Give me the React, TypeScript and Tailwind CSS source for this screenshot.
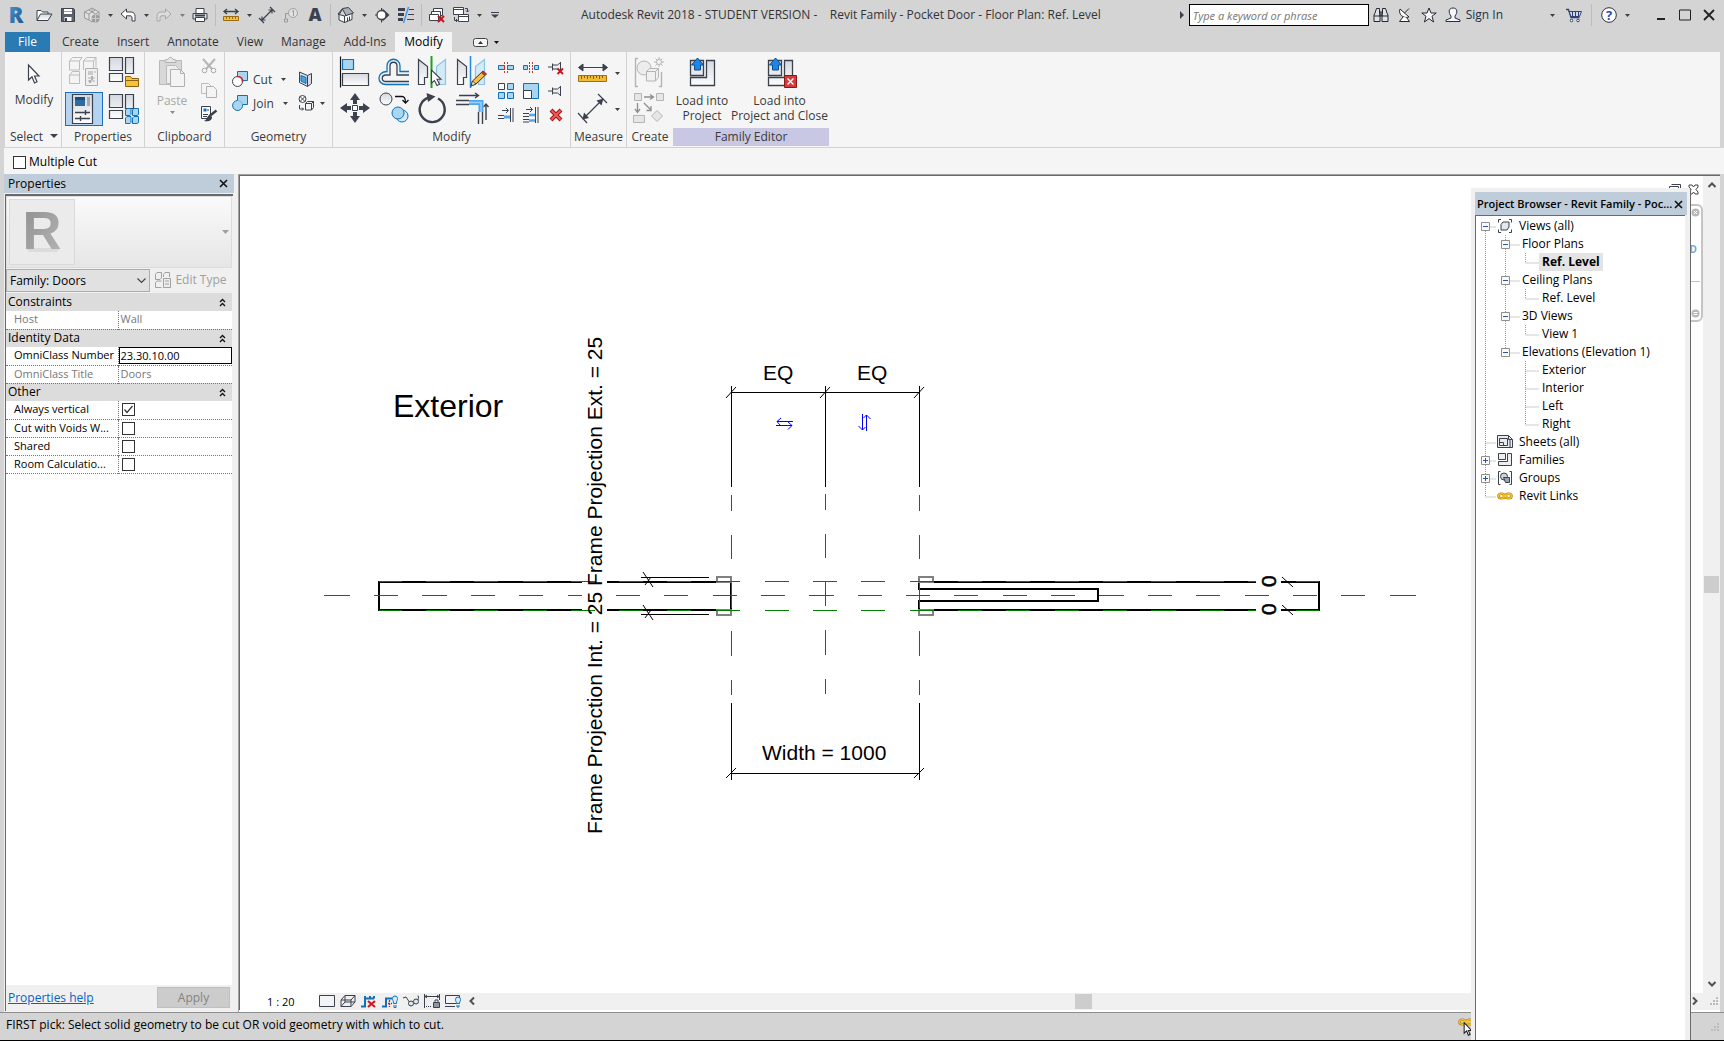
import type { ReactNode } from "react";
import clsx from "clsx";

const INK = "#3b424d";
const BLUE = "#1170b8";
const SKY = "#a8d6f0";
const GREY = "#b4b4b4";

type IconProps = { size?: number; w?: number; h?: number; children: ReactNode };

const Svg = ({ size = 16, w, h, children }: IconProps) => (
    <svg
        width={w ?? size}
        height={h ?? size}
        viewBox={`0 0 ${w ?? size} ${h ?? size}`}
        fill="none"
        className="block shrink-0 overflow-visible"
        aria-hidden="true"
    >
        {children}
    </svg>
);

const Caret = ({ color = "#3f3f3f" }: { color?: string }) => (
    <Svg w={5} h={3}>
        <path d="M0 0h5L2.5 3z" fill={color} />
    </Svg>
);

/* ---------- quick access icons ---------- */

const OpenIcon = () => (
    <Svg>
        <path d="M1 13V3.500h4l1.500 1.500H12V7" fill="#fff" stroke={INK} />
        <path d="M1 13.500l3.500-6.500H16l-4 6.500z" fill="url(#steel)" stroke={INK} />
    </Svg>
);
const SaveIcon = () => (
    <Svg>
        <path d="M1.500 1.500h12l1 1v12h-13z" fill="#5a626e" stroke={INK} />
        <path d="M4 2h8v5H4zM4.500 10h7v4h-7z" fill="#fff" />
        <path d="M4 4.500h8" stroke="#9aa3ae" />
        <path d="M6 11v3" stroke={INK} strokeWidth="2" />
    </Svg>
);
const GalleryIcon = () => (
    <Svg>
        <path d="M.5 5l4-2 3.500-2 3.500 2 3.500 2v6l-4 2-3 2-3-2-4.500-2z" fill="#e0e0e0" stroke="#999" />
        <path d="M.5 5L5 7v6M5 7l3-2 3.500 2L15 5M8 5v-4M4.500 3L8 5l3.500-2" stroke="#999" />
        <circle cx="11.500" cy="11.500" r="4" fill="#9d9d9d" />
        <path d="M8 11.500h7M11.500 8v7" stroke="#ccc" />
    </Svg>
);
const UndoIcon = () => (
    <Svg>
        <path d="M1 7l5.500-5v3H11c3 0 4 2 4 4.500V14h-3v-3c0-1.500-.5-2.200-2-2.200H6.500V12z" fill="#fff" stroke={INK} />
    </Svg>
);
const RedoIcon = () => (
    <Svg>
        <path d="M15 7L9.500 2v3H5C2 5 1 7 1 9.500V14h3v-3c0-1.500.5-2.200 2-2.200h3.500V12z" fill="#dcdcdc" stroke="#a6a6a6" />
    </Svg>
);
const PrintIcon = () => (
    <Svg>
        <path d="M4 6V1.500h8V6" fill="#fff" stroke={INK} />
        <path d="M1 6.500h14V12H1z" fill="#dfe3e8" stroke={INK} />
        <path d="M3 8.500h10" stroke={INK} strokeWidth="2" />
        <path d="M3.500 10.500h9v4h-9z" fill="#fff" stroke={INK} />
    </Svg>
);
const RulerIcon = () => (
    <Svg>
        <path d="M1 4.500h14M4 2L1 4.500 4 7M12 2l3 2.500L12 7" stroke={INK} strokeWidth="1.300" />
        <path d="M.5 9.500h15v4H.5z" fill="#f3c23c" stroke="#9b6a12" />
        <path d="M3.500 10v2M6.500 10v2M9.500 10v2M12.500 10v2" stroke="#9b6a12" />
    </Svg>
);
const DimIcon = () => (
    <Svg>
        <path d="M3 13L13 3M9.500 3H13v3.500M3 9.500V13h3.500M0 11l5 5M11 0l5 5" stroke={INK} strokeWidth="1.200" />
    </Svg>
);
const TagIcon = () => (
    <Svg>
        <circle cx="10" cy="6" r="4.500" fill="#e2e2e2" stroke="#a0a0a0" />
        <path d="M9 4.500l1.500-1V9M5.500 6.500H2.500V12M1.500 12h3v3h-3z" stroke="#9a9a9a" />
    </Svg>
);
const LetterIcon = () => (
    <Svg>
        <text x="8" y="14" textAnchor="middle" fontSize="18" fontWeight="800" fill={INK} fontFamily="Open Sans, sans-serif">
            A
        </text>
    </Svg>
);
const HouseIcon = () => (
    <Svg>
        <path d="M1 7.500v5.500l5.500 2.500V9zM6.500 9v6.500l7.500-3V6z" fill="#f4f5f7" stroke={INK} />
        <path d="M0 7l4.500-5.500L10.500.500 15.500 6 8 8.500 4.500 2 1 8z" fill="#aab0ba" stroke={INK} />
        <path d="M9.500 10.500v3.500M11.500 9.500v3.500" stroke={INK} />
    </Svg>
);
const SectionIcon = () => (
    <Svg>
        <path d="M8.500 1.500L15.500 8l-7 6.500z" fill={INK} />
        <circle cx="7.500" cy="8" r="4.500" fill="#fff" stroke={INK} strokeWidth="1.300" />
        <path d="M1 8h2M7.500 1v3M7.500 12v3.500" stroke={INK} />
    </Svg>
);
const ThinIcon = () => (
    <Svg>
        <path d="M0 2.500h7M0 7.500h6M0 12.500h5" stroke={INK} strokeWidth="3" />
        <path d="M11 2.500h5M10 7.500h6M9 12.500h7" stroke={INK} />
        <path d="M10.500 0L5.500 16" stroke="#3b96f0" strokeWidth="1.400" />
    </Svg>
);
const CloseHiddenIcon = () => (
    <Svg>
        <path d="M4.500 1.500h9v7h-9z" fill="#fff" stroke={INK} />
        <path d="M2.500 4.500h9v6h-9z" fill="#fff" stroke={INK} />
        <path d="M.5 7.500h9v6h-9z" fill="#fff" stroke={INK} />
        <path d="M9 9l6 6M15 9l-6 6" stroke="#c6141c" strokeWidth="2" />
    </Svg>
);
const SwitchIcon = () => (
    <Svg>
        <path d="M.5.500h10v7H.5z" fill="#fff" stroke={INK} />
        <path d="M.5 2.500h10" stroke={INK} />
        <path d="M5.500 7.500h10v7h-10z" fill="#fff" stroke={INK} />
        <path d="M5.500 9.500h10M1.500 10v3.500h3M3 12l1.500 1.500L3 15M12 1.500h2.500V5M13 3.500L14.500 5 16 3.500" stroke={INK} />
    </Svg>
);

/* ---------- title bar, right side ---------- */

const BinocularsIcon = () => (
    <Svg>
        <path d="M2 6l1.500-4.500h3V6l.5 1v7.500H1V8zM14 6l-1.500-4.500h-3V6L9 7v7.500h6V8z" fill="#dfe3e8" stroke="#23272e" />
        <path d="M7 5h2v4H7zM1 9h6M9 9h6" stroke="#23272e" />
    </Svg>
);
const DishIcon = () => (
    <Svg>
        <path d="M3 2c-2 5 3 10 9 8z" fill="#fff" stroke="#23272e" />
        <path d="M7.500 6L12 1.500" stroke="#23272e" />
        <path d="M6 10l-3.500 4.500h10L9.500 10.500" fill="#fff" stroke="#23272e" />
    </Svg>
);
const StarIcon = () => (
    <Svg>
        <path d="M8 1l2 5h5.200l-4.200 3.300L12.600 15 8 11.600 3.400 15 5 9.300.8 6H6z" fill="#f4f6f8" stroke="#23272e" />
    </Svg>
);
const PersonIcon = () => (
    <Svg>
        <path d="M8 1c5 0 4.500 5 2 8v2l5 2v1.500H1V13l5-2V9C3.500 6 3 1 8 1z" fill="#f4f6f8" stroke="#23304a" />
    </Svg>
);
const CartIcon = () => (
    <Svg>
        <path d="M0 2.500h2.500L5 10.500h8.500" stroke="#2c4376" strokeWidth="1.300" />
        <path d="M3 4.500h12.500l-2 5H5z" fill="#cfd9ee" stroke="#2c4376" />
        <path d="M6.500 5v4M9.500 5v4M12.500 5v4" stroke="#2c4376" />
        <circle cx="5.500" cy="13.500" r="1.300" fill="#fff" stroke="#2c4376" />
        <circle cx="12" cy="13.500" r="1.300" fill="#fff" stroke="#2c4376" />
    </Svg>
);
const HelpIcon = () => (
    <Svg>
        <circle cx="8" cy="8" r="7.300" fill="#fff" stroke="#2c3440" />
        <text x="8" y="12.500" textAnchor="middle" fontSize="13" fontWeight="700" fill="#1f50b8" fontFamily="Open Sans, sans-serif">
            ?
        </text>
    </Svg>
);

/* ---------- ribbon icons ---------- */

const CursorIcon = () => (
    <Svg w={14} h={20}>
        <path d="M1.500 1v15l3.500-3.300L7.500 19l2.500-1.200L7.500 12h4.500z" fill="#fff" stroke={INK} strokeWidth="1.200" />
    </Svg>
);
const FamilyTypesIcon = () => (
    <Svg size={32}>
        <path
            d="M1.500 5l3-3.500h9.500l-2.500 3.500v9h-10zM15.500 5l3-3.500h9.500v10M1.500 19l3-3.500h7v12h-10zM15.500 14V5h10v7M25.500 5l2.500-3.500M1.500 5h10M1.500 19h10"
            fill="#f4f4f4"
            stroke="#bdbdbd"
        />
        <path d="M17.500 12.500h12v17h-12z" fill="#f0f0f0" stroke="#adadad" />
        <path d="M20 15h5v4h-5z" fill="#c9c9c9" />
        <path d="M26 16h2M20 22h7M20 25h7" stroke="#b0b0b0" />
        <path d="M24 20v4M22 24v3" stroke="#b0b0b0" strokeWidth="2" />
    </Svg>
);
const CategoryIcon = () => (
    <Svg size={32}>
        <path d="M1.500 1.500h13v13h-13zM17.500 1.500h8v16h-8zM1.500 17.500h13v8h-13z" fill="url(#steel)" stroke={INK} strokeWidth="1.200" />
        <path d="M17.500 30.500v-10h5l1.500 2h6.500v8z" fill="#f5c33a" stroke="#8f6210" />
        <path d="M18 24.500h12" stroke="#8f6210" />
    </Svg>
);
const PropertiesIcon = () => (
    <Svg size={32}>
        <path d="M6.500 1.500h20v29h-20z" fill="url(#steel)" stroke={INK} strokeWidth="1.200" />
        <path d="M9 4h10v9H9z" fill="#2f6a9e" />
        <path d="M9 4h10v3H9z" fill="#1c4d7c" />
        <path d="M21 4h3v9h-3z" fill="#a4a9b2" />
        <path d="M9 19.500h15M9 25.500h15M19.500 17v5M14.500 23v5" stroke={INK} strokeWidth="1.400" />
    </Svg>
);
const ComponentsIcon = () => (
    <Svg size={32}>
        <path d="M1.500 1.500h13v13h-13zM17.500 1.500h8v14h-8zM1.500 17.500h13v8h-13z" fill="url(#steel)" stroke={INK} strokeWidth="1.200" />
        <path d="M17.500 17l1.500-1.500h4v6l-1 1h-4.500zM24.500 17l1.500-1.500h4.500v6l-1.500 1h-4.500zM17.500 25l1.500-1.500h4v6l-1 1h-4.500zM24.500 25l1.500-1.500h4.500v6l-1.500 1h-4.500z" fill={SKY} stroke={BLUE} />
    </Svg>
);
const PasteIcon = () => (
    <Svg size={32}>
        <path d="M3.500 4.500h22v24h-22z" fill="#d8d8d8" stroke="#b8b8b8" />
        <path d="M9 6.500V4l3-.5c1-3 4-3 5 0l3 .5v2.500z" fill="#e6e6e6" stroke="#b0b0b0" />
        <path d="M10.500 9.500h9l3 3v15h-12z" fill="#eee" stroke="#bbb" />
        <path d="M14.500 13.500h10l4 4v13h-14z" fill="#f3f3f3" stroke="#b0b0b0" />
        <path d="M24.500 13.500v4h4" stroke="#b0b0b0" />
    </Svg>
);
const ScissorsIcon = () => (
    <Svg>
        <path d="M2 1l9 10M14 1L5 11" stroke="#b5b5b5" strokeWidth="2" />
        <circle cx="3.500" cy="12.500" r="2.300" stroke="#a8a8a8" />
        <circle cx="12.500" cy="12.500" r="2.300" stroke="#a8a8a8" />
    </Svg>
);
const CopyIcon = () => (
    <Svg>
        <path d="M.5 1.500h7l2 2v8h-9z" fill="#f4f4f4" stroke="#bdbdbd" />
        <path d="M5.500 4.500h7l3 3v8h-10z" fill="#f4f4f4" stroke="#b0b0b0" />
    </Svg>
);
const MatchIcon = () => (
    <Svg>
        <path d="M.5.500h9v12h-9z" fill="#fff" stroke={INK} />
        <path d="M2.500 2.500h3v3h-3z" fill={BLUE} />
        <path d="M7 3v2M2 8.500h5M2 10.500h4" stroke={INK} />
        <path d="M15.500 4.500L8.500 10" stroke={INK} strokeWidth="2.400" />
        <path d="M9 9c-3 0-2 4-6 6 4 1 8 0 8-4z" fill={INK} />
    </Svg>
);
const CutGeoIcon = () => (
    <Svg>
        <path d="M5.500.500h10v9h-10z" fill={SKY} stroke={BLUE} />
        <circle cx="5.500" cy="10.500" r="5" fill="#fff" stroke={INK} />
        <path d="M5 5.500c4-.500 6 2.500 5.500 5.500" stroke="#e01b22" strokeWidth="1.500" />
    </Svg>
);
const JoinGeoIcon = () => (
    <Svg>
        <path d="M5.500 5.500v-5h10v9h-5a5 5 0 11-5-4z" fill={SKY} stroke={BLUE} />
        <path d="M5.500 5.500c3 0 5 2 4.800 4" stroke="#6db4de" />
    </Svg>
);
const WallIcon = () => (
    <Svg>
        <path d="M1.500 1l8 3.500 4-2v10l-4 3-8-4z" fill="#d9dde3" stroke={INK} />
        <path d="M9.500 4.500v11" stroke={INK} />
        <path d="M3 4.500l5 2v6l-5-2.500z" fill="#4da1d8" stroke={BLUE} />
    </Svg>
);
const SplitFaceIcon = () => (
    <Svg>
        <circle cx="4.500" cy="4" r="3.500" fill="#fff" stroke={INK} />
        <path d="M2 1.500l5 5M7 1.500l-5 5M1.500 10v4h4M4 12.500L5.500 14 4 15.500" stroke={INK} />
        <path d="M7.500 8.500l2-2h6v6l-2 2.500h-6zM7.500 8.500h6v6.500M13.500 8.500l2-2" fill="#f2f4f6" stroke={INK} />
    </Svg>
);
const AlignIcon = () => (
    <Svg size={32}>
        <path d="M1.500.500v31" stroke="#111" strokeWidth="1.200" />
        <path d="M3.500 3.500h11v10h-11z" fill={SKY} stroke={BLUE} strokeWidth="1.200" />
        <path d="M3.500 17.500h26v12h-26z" fill="url(#steel)" stroke={INK} strokeWidth="1.200" />
    </Svg>
);
const OffsetIcon = () => (
    <Svg size={32}>
        <path d="M31 15.500H22V10c0-9-13-9-13 0v5.500C-1.500 15.500-1.500 28.500 8 28.500h23" fill="#e8f4fb" stroke={BLUE} strokeWidth="1.300" />
        <path d="M31 19H19V10c0-5-7-5-7 0v9H8c-5 0-5 6.500 0 6.500h23" fill="#f5f5f5" stroke={INK} strokeWidth="1.300" />
    </Svg>
);
const MirrorShapes = () => (
    <>
        <path d="M1.500 3.500l9 7v11h-3v7h-6z" fill="url(#steel)" stroke={INK} strokeWidth="1.200" />
        <path d="M28.500 3.500l-9 7v11h3v7h6z" fill="#d3eaf7" stroke="#8fc3e4" strokeWidth="1.200" />
    </>
);
const MirrorPickIcon = () => (
    <Svg size={32}>
        <MirrorShapes />
        <path d="M14.500 0v32" stroke="#20a020" strokeWidth="2" />
        <path d="M14.500 14v13l3-2.500 2.500 5 2.500-1.200-2.500-5h4z" fill="#fff" stroke={INK} strokeWidth="1.100" />
    </Svg>
);
const Pencil = () => (
    <>
        <path d="M15 30l1.500-5L27 15l3.500 3L20 28z" fill="#f6bf45" stroke="#3a3025" />
        <path d="M15 30l1.500-5 3.500 3z" fill="#fbe7c6" stroke="#3a3025" strokeWidth=".8" />
        <path d="M25 17l3.500 3 2-2-3.500-3z" fill="#b8392d" />
    </>
);
const MirrorDrawIcon = () => (
    <Svg size={32}>
        <MirrorShapes />
        <path d="M14.500 0v32" stroke="#1f8ae0" strokeWidth="1.500" />
        <Pencil />
    </Svg>
);
const MoveIcon = () => (
    <Svg size={32}>
        <path d="M16 1l5 7h-3v4h-4V8h-3zM16 31l5-7h-3v-4h-4v4h-3zM1 16l7-5v3h4v4H8v3zM31 16l-7-5v3h-4v4h4v3z" fill={INK} />
        <path d="M13.500 13.500h5v5h-5z" fill="#fff" stroke={INK} />
    </Svg>
);
const CopyModIcon = () => (
    <Svg size={32}>
        <circle cx="8" cy="7" r="6" fill="url(#steel)" stroke={INK} />
        <path d="M17 4.500h7c2.500 0 3.500 1.500 3.500 6M24.500 8l3 3 3-3" stroke="#111" strokeWidth="1.300" />
        <circle cx="24" cy="24" r="6" fill="#d3eaf7" stroke={BLUE} />
        <circle cx="20" cy="21" r="6" fill={SKY} stroke={BLUE} />
    </Svg>
);
const RotateIcon = () => (
    <Svg size={32}>
        <path d="M12 5.500A12.500 12.500 0 1021 6.500" stroke={INK} strokeWidth="2.400" />
        <path d="M9.500 1l9 3.500L11 10z" fill={INK} />
    </Svg>
);
const TrimIcon = () => (
    <Svg size={32}>
        <path d="M3 3.500h19M19 1l3.500 2.500L19 6M0 8.500h13M0 12.500h13M22.500 20v12M26.500 20v12M30 28V12M27.500 15l2.500-3 2.500 3" stroke={INK} strokeWidth="1.400" />
        <path d="M13 10.500h12V20" stroke="#4fa6f2" strokeWidth="5" />
        <path d="M13 10.500h12V20" stroke="#9dd0fb" strokeWidth="1.500" />
    </Svg>
);
const SplitIcon = () => (
    <Svg>
        <path d="M.5 6.500h6v4h-6zM9.500 6.500h6v4h-6z" fill={SKY} stroke={BLUE} />
        <path d="M6.500 3v11M9.500 3v11" stroke="#c8352b" strokeDasharray="2 1" />
    </Svg>
);
const SplitGapIcon = () => (
    <Svg>
        <path d="M.5 6.500h4v4h-4zM11.500 6.500h4v4h-4z" fill={SKY} stroke={BLUE} />
        <path d="M6.500 3v11M9.500 3v11" stroke="#c8352b" strokeDasharray="2 1" />
    </Svg>
);
const PinShape = () => (
    <path d="M0 8h4M4.500 4.500v7M4.500 6h5l3-2.500v9l-3-2.500h-5M12.500 3v10" fill="#eceef1" stroke={INK} />
);
const UnpinIcon = () => (
    <Svg>
        <PinShape />
        <path d="M9.500 9.500l5.500 5.500M15 9.500L9.500 15" stroke="#c6141c" strokeWidth="1.800" />
    </Svg>
);
const PinIcon = () => (
    <Svg>
        <PinShape />
    </Svg>
);
const ArrayIcon = () => (
    <Svg>
        <path d="M.5.500h6v6h-6z" fill="#fff" stroke={INK} />
        <path d="M9.500.500h6v6h-6zM.5 9.500h6v6h-6zM9.500 9.500h6v6h-6z" fill={SKY} stroke={BLUE} />
    </Svg>
);
const ScaleIcon = () => (
    <Svg>
        <path d="M.5.500h15v15H.5z" fill={SKY} stroke={BLUE} />
        <path d="M.5 7.500h8v8h-8z" fill="#fff" stroke={INK} />
    </Svg>
);
const ExtendIcon = () => (
    <Svg>
        <path d="M4 3.500h6M8 1l2.500 2.500L8 6M0 8.500h6M0 11.500h6M12.500 1v14M15 1v14" stroke={INK} />
        <path d="M6 10h6" stroke="#4fa6f2" strokeWidth="3" />
    </Svg>
);
const ExtendMultiIcon = () => (
    <Svg>
        <path d="M3 2.500h6M7 0l2.500 2.500L7 5M0 6.500h6M0 9.500h6M0 12.500h6M0 15h6M12.500 0v16M15 0v16" stroke={INK} />
        <path d="M6 8h6M6 13.500h6" stroke="#4fa6f2" strokeWidth="2.500" />
    </Svg>
);
const DeleteIcon = () => (
    <Svg>
        <path d="M3 3l10 10M13 3L3 13" stroke="#a01318" strokeWidth="4" />
        <path d="M3.500 3.500l9 9M12.500 3.500l-9 9" stroke="#f05a55" strokeWidth="2" />
    </Svg>
);
const MeasureIcon = () => (
    <Svg w={32} h={22}>
        <path d="M2 5.500h28M6 2L1.500 5.500 6 9zM26 2l4.500 3.500L26 9z" stroke={INK} fill={INK} />
        <path d="M1.500 13.500h28v6h-28z" fill="#f0bb35" stroke="#a06f14" />
        <path d="M4.500 14v3M7.500 14v2M10.500 14v3M13.500 14v2M16.500 14v3M19.500 14v2M22.500 14v3M25.500 14v2" stroke="#8a5c0c" />
    </Svg>
);
const AlignedDimIcon = () => (
    <Svg size={32}>
        <path d="M7 25L25 7M1 20l9 10M21 1l9 9" stroke={INK} strokeWidth="1.200" />
        <path d="M5.500 26.500l1.500-7 5 5.500zM26.500 5.500l-7 2 5 5z" fill={INK} />
    </Svg>
);
const GroupIcon = () => (
    <Svg size={32}>
        <path d="M5 2.500H2.500v28H5M26 30.500h2.500V16" stroke={GREY} strokeWidth="1.400" />
        <circle cx="11" cy="12" r="7" fill="#ededed" stroke={GREY} />
        <path d="M13.500 15.500l3-3h9v9l-3 3.500h-9zM13.500 15.500h9V25M22.500 15.500l3-3" fill="#f0f0f0" stroke={GREY} />
        <path d="M26 1v10M21 6h10M22.500 2.500l7 7M29.500 2.500l-7 7" stroke={GREY} />
        <circle cx="26" cy="6" r="2.500" fill="#f5f5f5" stroke={GREY} />
    </Svg>
);
const AssemblyIcon = () => (
    <Svg size={32}>
        <path d="M1.500 1.500h7v7h-7zM23.500 1.500h7v7h-7zM.500 23.500h11v7h-11zM24 18.500l5.500 5.500-5.500 5.500-5.500-5.500z" fill="#e6e6e6" stroke={GREY} />
        <path d="M11 5h9M17 2.500L20.500 5 17 7.500M4.500 11v9M2 17l2.500 3.500L7 17M11 11l7 7M18 14v4.500h-4.500" stroke="#8e8e8e" strokeWidth="1.300" />
    </Svg>
);
const LoadShape = () => (
    <>
        <path d="M4.500 3.500h13v15h-13zM20.500 3.500h8v25h-24v-8h16z" fill="url(#steel)" stroke={INK} strokeWidth="1.300" />
        <path d="M11.500 1l6 7h-3v5h-6V8h-3z" fill="#1f86e4" stroke="#0d4f93" />
    </>
);
const LoadIcon = () => (
    <Svg size={32}>
        <LoadShape />
    </Svg>
);
const LoadCloseIcon = () => (
    <Svg size={32}>
        <LoadShape />
        <path d="M20.500 18.500h12v12h-12z" fill="#d63a3a" stroke="#8c1717" />
        <path d="M23.500 21.500l6 6M29.500 21.500l-6 6" stroke="#fff" strokeWidth="1.400" />
    </Svg>
);

/* ---------- browser + view bar icons ---------- */

const ViewsIcon = () => (
    <Svg>
        <path d="M4 1.500H1.500v3M12 1.500h2.500v3M4 14.500H1.500v-3M12 14.500h2.500v-3" stroke={INK} />
        <path d="M4 6.500L6 4h6v5l-2 3H4z" fill="#e4e7eb" stroke={INK} />
    </Svg>
);
const SheetsIcon = () => (
    <Svg>
        <path d="M.5 1.500h11l4 4v8H.5z" fill="#e9ecef" stroke={INK} />
        <path d="M2.500 4.500h8v7h-8zM2.500 8.500h4v3M11.500 1.500v4h4M13 6v7" stroke={INK} />
    </Svg>
);
const FamiliesIcon = () => (
    <Svg>
        <path d="M1.500 1.500h7v6h-7zM10.500 1.500h4v12h-13v-4h9z" fill="#eceef1" stroke={INK} />
    </Svg>
);
const GroupsIcon = () => (
    <Svg>
        <path d="M3.500 1.500h-2v13h2M12.500 1.500h2v13h-2" stroke={INK} />
        <circle cx="7" cy="6.500" r="3.500" fill="#cfd3da" stroke={INK} />
        <path d="M6.500 7.500h6v5h-4z" fill="#9ba3b0" stroke={INK} />
    </Svg>
);
const LinkIcon = () => (
    <Svg>
        <path d="M1.500 8c0-3 6-3 6 0s-6 3-6 0zM8.500 8c0-3 6-3 6 0s-6 3-6 0z" stroke="#b37a08" strokeWidth="2.500" />
        <path d="M1.500 8c0-3 6-3 6 0s-6 3-6 0zM8.500 8c0-3 6-3 6 0s-6 3-6 0zM5 8h6" stroke="#f3c32c" strokeWidth="1.300" />
    </Svg>
);
const DetailIcon = () => (
    <Svg>
        <path d="M.5 2.500h15v11H.5z" fill="#f1f3f6" stroke={INK} />
    </Svg>
);
const StyleIcon = () => (
    <Svg>
        <path d="M1 7l4-4.500h10V9l-4 4.500H1zM1 7h10v6.500M11 7l4-4.500M5 2.500V9h10M5 9l-4 4.500" stroke={INK} />
    </Svg>
);
const CropOffIcon = () => (
    <Svg>
        <path d="M0 13.500h4v-8h9M13 5.500V3M4 5.500V3M9 5.500V3" stroke={BLUE} strokeWidth="2" />
        <path d="M7 8l7 6M14 8l-7 6" stroke="#d01820" strokeWidth="2.200" />
    </Svg>
);
const CropShowIcon = () => (
    <Svg>
        <path d="M0 13.500h4v-8h6" stroke={BLUE} strokeWidth="2" />
        <path d="M7.500 7v7M6 10.500h4" stroke="#d01820" strokeWidth="1.300" strokeDasharray="2 1" />
        <path d="M10.500 5.500a2.500 2.500 0 015 0c0 2-1 2-1 5h-3c0-3-1-3-1-5zM12 12v2.500h2V12" fill="#d7ecfa" stroke={BLUE} />
    </Svg>
);
const HideIcon = () => (
    <Svg>
        <path d="M0 5l3-1 4 6M15 2.500c1 2 0 4 0 5" stroke={INK} />
        <circle cx="8" cy="10.500" r="2.500" fill="#dfe6ee" stroke={INK} />
        <circle cx="13" cy="8.500" r="2.500" fill="#dfe6ee" stroke={INK} />
    </Svg>
);
const RevealIcon = () => (
    <Svg>
        <path d="M.5 1v14M15.500 1v6M1 3.500h14M3 2L1 3.500 3 5M13 2l2 1.500L13 5" stroke={INK} />
        <path d="M2 13.500h6" stroke={INK} strokeDasharray="1 1" />
        <path d="M9.500 9.500h6v5h-6z" fill="#8e96a3" stroke={INK} />
        <path d="M11 9V7h3v2" stroke={INK} />
    </Svg>
);
const ConstraintsIcon = () => (
    <Svg>
        <path d="M.5 2.500h14v8H.5zM0 13.500h10" stroke={INK} fill="#f1f3f6" />
        <path d="M10.500 6.500a2.300 2.300 0 015 0c0 2-1 2-1 4h-3c0-2-1-2-1-4zM12 12v2h2v-2" fill="#d7ecfa" stroke={BLUE} />
    </Svg>
);

const Chevron = ({ dir }: { dir: "up" | "down" | "left" | "right" }) => {
    const d = {
        up: "M1.500 7L5 3.500 8.500 7",
        down: "M1.500 3L5 6.500 8.500 3",
        left: "M7 1.500L3.500 5 7 8.500",
        right: "M3 1.500L6.500 5 3 8.500",
    }[dir];
    return (
        <Svg size={10}>
            <path d={d} stroke="#505050" strokeWidth="2" />
        </Svg>
    );
};

const Grip = () => (
    <Svg size={10}>
        <path d="M7 1h2v2H7zM4 4h2v2H4zM7 4h2v2H7zM1 7h2v2H1zM4 7h2v2H4zM7 7h2v2H7z" fill="#bdbdbd" />
    </Svg>
);

/* ---------- title bar ---------- */

const IconButton = ({ label, className, children }: { label: string; className?: string; children: ReactNode }) => (
    <button type="button" aria-label={label} className={clsx("flex shrink-0 items-center justify-center", className)}>
        {children}
    </button>
);

const Tool = ({ label, children }: { label: string; children: ReactNode }) => (
    <IconButton label={label} className="h-6 w-6">
        {children}
    </IconButton>
);

const Drop = ({ label, color }: { label: string; color?: string }) => (
    <IconButton label={label} className="h-6 w-3">
        <Caret color={color} />
    </IconButton>
);

const Divider = () => <span className="mx-[3px] h-[22px] w-px shrink-0 bg-[#bcbcbc]" />;

const TitleBar = () => (
    <header className="flex h-8 items-center pb-[2px]">
        <IconButton label="Application menu" className="h-6 w-8">
            <Svg w={18} h={20}>
                <text x="9" y="18" textAnchor="middle" fontSize="22" fontWeight="800" fill="url(#logo)" fontFamily="Open Sans, sans-serif">
                    R
                </text>
            </Svg>
        </IconButton>
        <Tool label="Open"><OpenIcon /></Tool>
        <Tool label="Save"><SaveIcon /></Tool>
        <Tool label="Render gallery"><GalleryIcon /></Tool>
        <Drop label="Gallery options" />
        <Tool label="Undo"><UndoIcon /></Tool>
        <Drop label="Undo history" />
        <Tool label="Redo"><RedoIcon /></Tool>
        <Drop label="Redo history" color="#7d7d7d" />
        <Tool label="Print"><PrintIcon /></Tool>
        <Divider />
        <Tool label="Measure"><RulerIcon /></Tool>
        <Drop label="Measure options" />
        <Tool label="Aligned dimension"><DimIcon /></Tool>
        <Tool label="Tag"><TagIcon /></Tool>
        <Tool label="Text"><LetterIcon /></Tool>
        <Divider />
        <Tool label="3D view"><HouseIcon /></Tool>
        <Drop label="3D view options" />
        <Tool label="Section"><SectionIcon /></Tool>
        <Tool label="Thin lines"><ThinIcon /></Tool>
        <Divider />
        <Tool label="Close hidden windows"><CloseHiddenIcon /></Tool>
        <Tool label="Switch windows"><SwitchIcon /></Tool>
        <Drop label="Switch windows list" />
        <IconButton label="Customize toolbar" className="h-6 w-5">
            <Svg w={8} h={6}>
                <path d="M0 .5h8" stroke={INK} />
                <path d="M0 2.500h8L4 6z" fill={INK} />
            </Svg>
        </IconButton>

        <h1 className="flex-1 text-center text-[12px] whitespace-pre text-[#333]">
            {"Autodesk Revit 2018 - STUDENT VERSION -    Revit Family - Pocket Door - Floor Plan: Ref. Level"}
        </h1>

        <Svg w={12} h={8}>
            <path d="M3 0v8l4-4z" fill={INK} />
        </Svg>
        <input
            aria-label="Search"
            placeholder="Type a keyword or phrase"
            className="h-[22px] w-[180px] border border-black bg-white px-[3px] text-[11px] italic placeholder:text-[#757575]"
        />
        <Tool label="Search"><BinocularsIcon /></Tool>
        <Tool label="Subscription"><DishIcon /></Tool>
        <Tool label="Favorites"><StarIcon /></Tool>
        <button type="button" className="flex h-6 items-center gap-[5px] pl-1 text-[12px] text-[#23304a]">
            <PersonIcon />
            Sign In
        </button>
        <span className="w-[43px]" />
        <Drop label="Account menu" />
        <span className="w-1" />
        <Tool label="Store"><CartIcon /></Tool>
        <span className="mx-[5px] h-[22px] w-px bg-[#bcbcbc]" />
        <Tool label="Help"><HelpIcon /></Tool>
        <Drop label="Help menu" />
        <span className="w-4" />
        <Tool label="Minimize">
            <Svg size={12}>
                <path d="M2 10h8" stroke="#222" strokeWidth="2" />
            </Svg>
        </Tool>
        <Tool label="Maximize">
            <Svg size={12}>
                <path d="M.5 1h11v10H.5z" stroke="#222" />
            </Svg>
        </Tool>
        <Tool label="Close">
            <Svg size={12}>
                <path d="M1 1l10 10M11 1L1 11" stroke="#222" strokeWidth="1.800" />
            </Svg>
        </Tool>
        <span className="w-[3px]" />
    </header>
);

const tabs = ["Create", "Insert", "Annotate", "View", "Manage", "Add-Ins", "Modify"];

const TabBar = () => (
    <nav className="flex h-5 pl-[5px] text-[12px] leading-5 text-[#333]">
        <button type="button" className="w-[45px] bg-[#2a7ab4] text-white">
            File
        </button>
        <span className="w-[3px]" />
        {tabs.map((tab) => (
            <button
                key={tab}
                type="button"
                className={clsx("px-[9px]", tab === "Modify" && "bg-[#f5f5f5] text-black")}
            >
                {tab}
            </button>
        ))}
        <button type="button" aria-label="Ribbon display" className="ml-[21px] flex items-center gap-[6px]">
            <Svg w={15} h={9}>
                <rect x=".5" y=".5" width="14" height="8" rx="2" fill="#f5f5f5" stroke="#444" />
                <path d="M5 6l2.500-3L10 6z" fill="#333" />
            </Svg>
            <Caret color="#111" />
        </button>
    </nav>
);

/* ---------- ribbon ---------- */

type PanelProps = { title: ReactNode; className: string; last?: boolean; tint?: boolean; children: ReactNode };

const Panel = ({ title, className, last, tint, children }: PanelProps) => (
    <section className={clsx("flex shrink-0 flex-col pb-px", className, !last && "border-r border-[#d2d2d2]")}>
        <div className="flex flex-1">{children}</div>
        <h2 className={clsx("flex h-[18px] items-center justify-center gap-[7px] pb-[2px]", tint && "bg-[#c8c8e4]")}>
            {title}
        </h2>
    </section>
);

const modifyBig: [string, () => ReactNode][] = [
    ["Align", AlignIcon],
    ["Offset", OffsetIcon],
    ["Mirror - Pick Axis", MirrorPickIcon],
    ["Mirror - Draw Axis", MirrorDrawIcon],
    ["Move", MoveIcon],
    ["Copy", CopyModIcon],
    ["Rotate", RotateIcon],
    ["Trim/Extend to Corner", TrimIcon],
];

const modifySmall: [string, () => ReactNode][] = [
    ["Split Element", SplitIcon],
    ["Split with Gap", SplitGapIcon],
    ["Unpin", UnpinIcon],
    ["Array", ArrayIcon],
    ["Scale", ScaleIcon],
    ["Pin", PinIcon],
    ["Trim Single", ExtendIcon],
    ["Trim Multiple", ExtendMultiIcon],
    ["Delete", DeleteIcon],
];

const Ribbon = () => (
    <div className="mr-1 ml-[5px] flex h-24 border-b border-[#d2d2d2] bg-[#f5f5f5] text-[12px] leading-[15px] text-[#3a3a3a]">
        <Panel
            className="w-[57px] pl-[2px]"
            title={
                <>
                    Select
                    <Svg w={8} h={4}>
                        <path d="M0 0h8L4 4z" fill={INK} />
                    </Svg>
                </>
            }
        >
            <button type="button" className="flex flex-1 flex-col items-center gap-2 pt-3">
                <CursorIcon />
                Modify
            </button>
        </Panel>

        <Panel title="Properties" className="w-[83px]">
            <div className="grid grid-cols-[38px_38px] grid-rows-[34px_34px] gap-x-[2px] gap-y-[3px] pt-[3px] pl-[3px]">
                <IconButton label="Family Types"><FamilyTypesIcon /></IconButton>
                <IconButton label="Family Category and Parameters"><CategoryIcon /></IconButton>
                <IconButton label="Properties" className="border border-[#1a6fc0] bg-[#b4d3f1] pr-1">
                    <PropertiesIcon />
                </IconButton>
                <IconButton label="Components"><ComponentsIcon /></IconButton>
            </div>
        </Panel>

        <Panel title="Clipboard" className="w-20">
            <button type="button" className="ml-[11px] flex w-9 flex-col items-center pt-1 text-[#a8a8a8]">
                <PasteIcon />
                <span className="mt-[5px] mb-[3px]">Paste</span>
                <Caret color="#8a8a8a" />
            </button>
            <div className="flex w-11 shrink-0 flex-col items-center gap-2 pt-[6px] pr-[3px]">
                <IconButton label="Cut to clipboard"><ScissorsIcon /></IconButton>
                <IconButton label="Copy to clipboard"><CopyIcon /></IconButton>
                <IconButton label="Match type"><MatchIcon /></IconButton>
            </div>
        </Panel>

        <Panel title="Geometry" className="w-[108px]">
            <div className="flex flex-1 flex-col gap-2 pt-[19px] pl-[7px]">
                <div className="flex items-center">
                    <button type="button" className="flex w-[54px] items-center gap-[5px]">
                        <CutGeoIcon />
                        <span className="flex-1 text-left">Cut</span>
                        <Caret />
                    </button>
                    <IconButton label="Wall opening" className="ml-3"><WallIcon /></IconButton>
                </div>
                <div className="flex items-center">
                    <button type="button" className="flex w-[56px] items-center gap-[5px]">
                        <JoinGeoIcon />
                        <span className="flex-1 text-left">Join</span>
                        <Caret />
                    </button>
                    <IconButton label="Split face" className="ml-[10px] gap-[6px]">
                        <SplitFaceIcon />
                        <Caret />
                    </IconButton>
                </div>
            </div>
        </Panel>

        <Panel title="Modify" className="w-[238px]">
            <div className="grid grid-cols-[39px_39px_39px_39px] grid-rows-[36px_36px] pt-[2px] pl-[2px]">
                {modifyBig.map(([label, Icon]) => (
                    <IconButton key={label} label={label}><Icon /></IconButton>
                ))}
            </div>
            <div className="grid grid-cols-[25px_25px_25px] grid-rows-[24px_24px_24px] pt-[3px] pl-[2px]">
                {modifySmall.map(([label, Icon]) => (
                    <IconButton key={label} label={label}><Icon /></IconButton>
                ))}
            </div>
        </Panel>

        <Panel title="Measure" className="w-14">
            <div className="grid grid-cols-[32px_12px] grid-rows-[36px_36px] gap-x-[2px] pt-[3px] pl-[6px]">
                <IconButton label="Measure between references"><MeasureIcon /></IconButton>
                <IconButton label="Measure list"><Caret /></IconButton>
                <IconButton label="Dimension"><AlignedDimIcon /></IconButton>
                <IconButton label="Dimension list"><Caret /></IconButton>
            </div>
        </Panel>

        <Panel title="Create" className="w-[46px]" last>
            <div className="grid w-[46px] grid-rows-[36px_36px] justify-center pt-[2px] pr-[2px]">
                <IconButton label="Create group"><GroupIcon /></IconButton>
                <IconButton label="Create similar"><AssemblyIcon /></IconButton>
            </div>
        </Panel>

        <Panel title="Family Editor" className="w-[156px]" last tint>
            <button type="button" className="flex w-[58px] flex-col items-center pt-[5px]">
                <LoadIcon />
                <span className="mt-1 text-center">Load into Project</span>
            </button>
            <button type="button" className="flex w-[97px] flex-col items-center pt-[5px]">
                <LoadCloseIcon />
                <span className="mt-1 text-center whitespace-nowrap">
                    Load into
                    <br />
                    Project and Close
                </span>
            </button>
        </Panel>
    </div>
);

const OptionsBar = () => (
    <div className="ml-1 flex h-[26px] items-center bg-[#f5f5f5] pt-[2px] pl-[9px]">
        <label className="flex items-center gap-[3px] text-[12px] text-black">
            <input type="checkbox" className="h-[13px] w-[13px] appearance-none border border-[#333] bg-white" />
            Multiple Cut
        </label>
    </div>
);

/* ---------- properties palette ---------- */

type Row = { name: string; value?: string; checked?: boolean; muted?: boolean; edit?: boolean };

const groups: { title: string; rows: Row[] }[] = [
    { title: "Constraints", rows: [{ name: "Host", value: "Wall", muted: true }] },
    {
        title: "Identity Data",
        rows: [
            { name: "OmniClass Number", value: "23.30.10.00", edit: true },
            { name: "OmniClass Title", value: "Doors", muted: true },
        ],
    },
    {
        title: "Other",
        rows: [
            { name: "Always vertical", checked: true },
            { name: "Cut with Voids W...", checked: false },
            { name: "Shared", checked: false },
            { name: "Room Calculatio...", checked: false },
        ],
    },
];

const PropertyValue = ({ row }: { row: Row }) => {
    if (row.checked !== undefined) {
        return (
            <span className="relative mt-[2px] ml-[3px] block h-[13px] w-[13px]">
                <input
                    type="checkbox"
                    aria-label={row.name}
                    defaultChecked={row.checked}
                    className="peer block h-[13px] w-[13px] appearance-none border border-[#333] bg-white"
                />
                <svg
                    width="13"
                    height="13"
                    viewBox="0 0 13 13"
                    fill="none"
                    className="pointer-events-none absolute inset-0 hidden peer-checked:block"
                >
                    <path d="M2.500 6.500l2.500 3 5.500-6.500" stroke="#333" strokeWidth="1.200" />
                </svg>
            </span>
        );
    }
    if (row.edit) {
        return (
            <input
                aria-label={row.name}
                defaultValue={row.value}
                className="block h-[17px] w-full border border-black bg-white px-[1px] pb-px text-[11px] leading-[14px]"
            />
        );
    }
    return <span className="pl-[2px]">{row.value}</span>;
};

const Collapse = () => (
    <Svg w={7} h={9}>
        <path d="M1 4l2.500-2.500L6 4M1 8l2.500-2.500L6 8" stroke="#111" strokeWidth="1.300" />
    </Svg>
);

const CloseGlyph = () => (
    <Svg size={9}>
        <path d="M1 1l7 7M8 1L1 8" stroke="#111" strokeWidth="1.600" />
    </Svg>
);

const PropertiesPalette = () => (
    <aside className="flex w-[230px] shrink-0 flex-col text-[12px] text-black">
        <div className="flex h-[19px] items-center justify-between bg-[#bfcddb] pr-[6px] pl-1">
            <h2>Properties</h2>
            <IconButton label="Close properties"><CloseGlyph /></IconButton>
        </div>
        <div className="mt-px mr-px mb-px ml-px flex flex-1 flex-col border-t-2 border-l border-[#696969] pr-px">
            <div className="flex h-[72px] items-center border border-[#dcdcdc] bg-linear-to-b from-[#fafafa] to-[#e6e6e6] px-[2px]">
                <div className="flex h-[66px] w-[66px] items-center justify-center border border-[#dadada] bg-[#ebebeb]">
                    <Svg w={44} h={54}>
                        <path d="M6 43l3 4h28l3-4z" fill="#dcdcdc" />
                        <text x="22" y="44" textAnchor="middle" fontSize="54" fontWeight="700" fill="url(#stone)" fontFamily="Liberation Sans, sans-serif">
                            R
                        </text>
                    </Svg>
                </div>
                <span className="flex-1" />
                <IconButton label="Type selector">
                    <Svg w={7} h={4}>
                        <path d="M0 0h7L3.500 4z" fill="#a0a0a0" />
                    </Svg>
                </IconButton>
            </div>
            <div className="flex items-center py-px">
                <div className="relative w-36">
                    <select
                        aria-label="Filter"
                        className="block h-[23px] w-full appearance-none border border-[#adadad] bg-[#e1e1e1] pl-[3px] text-[12px]"
                    >
                        <option>Family: Doors</option>
                    </select>
                    <svg width="9" height="6" viewBox="0 0 9 6" fill="none" className="pointer-events-none absolute top-[9px] right-1">
                        <path d="M.5.500l4 4 4-4" stroke="#444" strokeWidth="1.200" />
                    </svg>
                </div>
                <button type="button" disabled className="flex flex-1 items-center justify-center gap-1 pb-[2px] text-[#a0a0a0]">
                    <Svg>
                        <path d="M.5 7.500v-5L2 .5h4.500v5.500L5 7.500zM8.500 5V2.500L10 .5h4.500V5M.5 15.500v-5L2 9h4.500M.5 15.500H6.500" stroke="#a0a0a0" />
                        <path d="M8.500 6.500h7v9h-7z" fill="#eee" stroke="#a0a0a0" />
                        <path d="M10 9h4M10 12h4" stroke="#a0a0a0" />
                    </Svg>
                    Edit Type
                </button>
            </div>
            <div className="flex-1 bg-white">
                <table className="w-full table-fixed border-collapse leading-4">
                    <colgroup>
                        <col className="w-[112px]" />
                        <col />
                    </colgroup>
                    {groups.map((group) => (
                        <tbody key={group.title}>
                            <tr className="h-[18px] bg-[#dcdcdc]">
                                <th colSpan={2} className="p-0 font-normal">
                                    <button type="button" className="flex w-full items-center justify-between pr-[6px] pl-[2px]">
                                        {group.title}
                                        <Collapse />
                                    </button>
                                </th>
                            </tr>
                            {group.rows.map((row) => (
                                <tr
                                    key={row.name}
                                    className={clsx(
                                        "h-[18px] border-b border-dotted border-[#777] align-top text-[11px] leading-[15px]",
                                        row.muted && "text-[#777]",
                                    )}
                                >
                                    <td className="border-r border-dotted border-[#777] p-0 pl-2 whitespace-nowrap">
                                        {row.name}
                                    </td>
                                    <td className="p-0"><PropertyValue row={row} /></td>
                                </tr>
                            ))}
                        </tbody>
                    ))}
                </table>
            </div>
            <div className="flex h-[26px] items-center justify-between pr-[2px] pb-px pl-[2px]">
                <a href="#help" className="text-[#0563c8] underline">
                    Properties help
                </a>
                <button type="button" disabled className="h-[21px] w-[73px] border border-[#bfbfbf] bg-[#cccccc] text-[#838383]">
                    Apply
                </button>
            </div>
        </div>
    </aside>
);

/* ---------- drawing ---------- */

const GREEN = "#007d00";

const centerDashes = [
    [324, 350], [374, 398], [422, 447], [471, 495], [519, 543], [568, 582], [616, 640], [664, 688], [713, 737],
    [761, 785], [809, 834], [858, 882], [906, 930], [954, 978], [1003, 1027], [1051, 1075], [1099, 1124],
    [1148, 1172], [1196, 1220], [1245, 1269], [1293, 1317], [1341, 1365], [1390, 1416],
];
const faceDashes = [
    [379, 402], [426, 450], [474, 498], [523, 547], [571, 595], [619, 643], [667, 691], [716, 740], [765, 789],
    [813, 837], [861, 885], [910, 934], [958, 982], [1006, 1030], [1055, 1079], [1103, 1127], [1151, 1176],
    [1200, 1224], [1248, 1256], [1296, 1319],
];
const sideDashes = [[495, 511], [535, 559], [583, 608], [631, 656], [680, 695]];
const midDashes = [[494, 510], [534, 558], [582, 606], [630, 655], [679, 694]];

const hDashes = (y: number, list: number[][]) => list.map(([a, b]) => `M${a} ${y}.5H${b}`).join("");
const vDashes = (x: number, list: number[][]) => list.map(([a, b]) => `M${x}.5 ${a}V${b}`).join("");

const Drawing = () => (
    <svg className="block h-full w-full" fontFamily="Liberation Sans, Arial, sans-serif" fontSize="21" role="img" aria-label="Floor plan">
        <g transform="translate(-240 -176)" fill="none">
            <g shapeRendering="crispEdges">
                {/* walls */}
                <g stroke="#000" strokeWidth="2">
                    <path d="M582 582H379V610H582M607 582H731V610H607" />
                    <path d="M1256 582H919V589H1098V601H919V610H1256M1281 582H1319V610H1281" />
                </g>
                {/* jambs */}
                <path
                    d="M717 577H731V582H717zM717 610H731V615H717zM919 577H933V582H919zM919 610H933V615H919z"
                    stroke="#808080"
                    strokeWidth="2"
                />
                {/* reference planes */}
                <path
                    d={
                        hDashes(595, centerDashes) +
                        hDashes(581, faceDashes) +
                        hDashes(610, faceDashes) +
                        vDashes(731, sideDashes) +
                        vDashes(825, midDashes) +
                        vDashes(919, sideDashes)
                    }
                    stroke={GREEN}
                />
                {/* dimension lines */}
                <path
                    d="M731.500 386V487M825.500 386V487M919.500 386V487M731 392.500H920M731.500 703V780M919.500 703V780M731 773.500H920M641 577.500H709M641 614.500H709"
                    stroke="#000"
                />
            </g>
            <path
                d="M726 398l10-11M820 398l10-11M914 398l10-11M726 778l10-10M914 778l10-10M643 572l10 15M645 585l6-8M643 605l10 15M645 618l6-8M1282 577l11 10M1282 605l11 10"
                stroke="#000"
            />
            <path
                d="M777 421.500H793M781 418l-4 3.500 3 3.500M776 425.500H792M788 429.500l4-4-4-3.500M862.500 414V430M858.500 426l4 4 3-3M866.500 415V431M863.500 418l3-3 4 4"
                stroke="#0000ff"
            />
            <g fill="#000">
                <text x="393" y="417" fontSize="32">Exterior</text>
                <text x="763" y="380">EQ</text>
                <text x="857" y="380">EQ</text>
                <text x="762" y="760">Width = 1000</text>
                <text transform="translate(602 586) rotate(-90)">Frame Projection Ext. = 25</text>
                <text transform="translate(602 834) rotate(-90)">Frame Projection Int. = 25</text>
                <text transform="translate(1276 587) rotate(-90)" stroke="#000" strokeWidth=".5">0</text>
                <text transform="translate(1276 615) rotate(-90)" stroke="#000" strokeWidth=".5">0</text>
            </g>
        </g>
    </svg>
);

const viewControls: [string, () => ReactNode][] = [
    ["Detail level", DetailIcon],
    ["Visual style", StyleIcon],
    ["Crop view", CropOffIcon],
    ["Show crop region", CropShowIcon],
    ["Temporary hide", HideIcon],
    ["Reveal constraints", RevealIcon],
    ["Preview visibility", ConstraintsIcon],
];

const Canvas = () => (
    <main className="relative ml-1 flex min-w-0 flex-1 flex-col border-t border-l border-[#a0a0a0]">
        <div className="flex min-h-0 flex-1 flex-col border-t border-l border-[#696969]">
            <div className="flex min-h-0 flex-1">
                <div className="relative min-w-0 flex-1 bg-white">
                    <div className="absolute inset-0"><Drawing /></div>
                    {/* window controls and navigation bar, partly under the browser */}
                    <span className="absolute top-[8px] right-[22px]">
                        <Svg w={12} h={10}>
                            <path d="M2.500.500h9v7M.500 2.500h9v7h-9z" stroke={INK} fill="none" />
                        </Svg>
                    </span>
                    <span className="absolute top-[8px] right-[4px]">
                        <Svg w={11} h={11}>
                            <path d="M1 1h3l1.500 2L7 1h3v2L8 5.500 10 8v2H7L5.500 8 4 10H1V8l2-2.500L1 3z" fill="#fff" stroke={INK} />
                        </Svg>
                    </span>
                    <div className="absolute top-[28px] right-0 flex h-[118px] w-5 flex-col items-end justify-between rounded-md border-2 border-[#c4c4c4] bg-white py-[2px] pr-px">
                        <Svg size={9}>
                            <circle cx="4.500" cy="4.500" r="4" fill="#b8b8b8" />
                            <path d="M3 3l3 3M6 3L3 6" stroke="#fff" />
                        </Svg>
                        <span className="pr-[3px] text-[10px] leading-none font-bold text-[#7ba3d0]">D</span>
                        <span className="h-px w-3 bg-[#c4c4c4]" />
                        <Svg size={9}>
                            <circle cx="4.500" cy="4.500" r="4" fill="#b8b8b8" />
                            <path d="M2.500 3.500h4M2.500 5.500h4" stroke="#fff" />
                        </Svg>
                    </div>
                </div>
                <div className="relative flex w-[17px] shrink-0 flex-col items-center justify-between bg-[#f0f0f0] py-1">
                    <Chevron dir="up" />
                    <span className="absolute top-[49%] h-[17px] w-[15px] bg-[#cdcdcd]" />
                    <Chevron dir="down" />
                </div>
            </div>
            <div className="flex h-[17px] shrink-0 items-center bg-[#f0f0f0] pb-px">
                <span className="h-[17px] w-[79px] bg-white pl-[27px] text-[11px] leading-[17px] whitespace-pre">1 : 20</span>
                <div className="flex gap-[5px]">
                    {viewControls.map(([label, Icon]) => (
                        <IconButton key={label} label={label}><Icon /></IconButton>
                    ))}
                </div>
                <div className="ml-[6px] flex flex-1 items-center justify-between">
                    <Chevron dir="left" />
                    <span className="h-[15px] w-[17px] bg-[#cdcdcd]" />
                    <Chevron dir="right" />
                </div>
                <span className="flex w-5 justify-end pr-px"><Grip /></span>
            </div>
        </div>
        <div className="h-[2px] bg-white" />
    </main>
);

/* ---------- project browser ---------- */

type Node = { level: 0 | 1 | 2; label: string; toggle?: "+" | "-"; icon?: () => ReactNode; current?: boolean };

const nodes: Node[] = [
    { level: 0, label: "Views (all)", toggle: "-", icon: ViewsIcon },
    { level: 1, label: "Floor Plans", toggle: "-" },
    { level: 2, label: "Ref. Level", current: true },
    { level: 1, label: "Ceiling Plans", toggle: "-" },
    { level: 2, label: "Ref. Level" },
    { level: 1, label: "3D Views", toggle: "-" },
    { level: 2, label: "View 1" },
    { level: 1, label: "Elevations (Elevation 1)", toggle: "-" },
    { level: 2, label: "Exterior" },
    { level: 2, label: "Interior" },
    { level: 2, label: "Left" },
    { level: 2, label: "Right" },
    { level: 0, label: "Sheets (all)", icon: SheetsIcon },
    { level: 0, label: "Families", toggle: "+", icon: FamiliesIcon },
    { level: 0, label: "Groups", toggle: "+", icon: GroupsIcon },
    { level: 0, label: "Revit Links", icon: LinkIcon },
];

const Toggle = ({ kind }: { kind: "+" | "-" }) => (
    <button type="button" aria-label={kind === "+" ? "Expand" : "Collapse"} className="absolute top-[5px] -left-[4px]">
        <Svg size={9}>
            <path d="M.5.500h8v8h-8z" fill="#fafafa" stroke="#8f8f8f" />
            <path d={kind === "+" ? "M2 4.500h5M4.500 2v5" : "M2 4.500h5"} stroke="#2c56a0" />
        </Svg>
    </button>
);

const ProjectBrowser = () => (
    <aside className="absolute top-[188px] right-[33px] bottom-px flex w-[220px] flex-col border-r border-[#696969] bg-[#f0f0f0] pt-1 pr-[3px] pl-1 text-[12px] text-black">
        <div className="flex h-[23px] items-center justify-between bg-[#bfcddb] pt-px pr-1 pl-[2px]">
            <h2 className="text-[11px] font-semibold whitespace-nowrap">Project Browser - Revit Family - Poc...</h2>
            <IconButton label="Close browser"><CloseGlyph /></IconButton>
        </div>
        <div className="relative mr-[2px] flex-1 border-t border-l border-[#696969] bg-white pt-px">
            {/* dotted connectors */}
            <svg width="64" height="292" className="absolute top-px left-0" fill="none" aria-hidden="true">
                <path
                    d="M9.500 10V280M9.500 10H20M9.500 226H20M9.500 244H20M9.500 262H20M9.500 280H20M29.500 18V135M29.500 28H44M29.500 64H44M29.500 100H44M29.500 136H44M49.500 36V46H63M49.500 72V82H63M49.500 108V118H63M49.500 144V208M49.500 154H63M49.500 172H63M49.500 190H63M49.500 208H63"
                    stroke="#9a9a9a"
                    strokeDasharray="1 1"
                />
            </svg>
            <ul className="leading-[18px]">
                {nodes.map((node, i) => (
                    <li
                        key={i}
                        className={clsx(
                            "relative flex h-[18px] items-center",
                            node.level === 0 && "ml-[9px] pl-3",
                            node.level === 1 && "ml-[29px] pl-[17px]",
                            node.level === 2 && "ml-[49px] pl-[14px]",
                        )}
                    >
                        {node.toggle && <Toggle kind={node.toggle} />}
                        {node.icon && (
                            <span className="mr-[6px]"><node.icon /></span>
                        )}
                        <span className={clsx(node.level === 2 && "px-[3px]", node.current && "bg-[#e4e4e4] font-bold")}>
                            {node.label}
                        </span>
                    </li>
                ))}
            </ul>
        </div>
    </aside>
);

const StatusBar = () => (
    <footer className="flex h-[29px] items-center justify-between border-t border-b border-t-[#8e8e8e] border-b-black pl-[6px] text-[12px] text-black">
        <p className="pb-1">FIRST pick: Select solid geometry to be cut OR void geometry with which to cut.</p>
        <div className="flex items-center">
            <span className="relative mr-[236px] mb-[10px]">
                <LinkIcon />
                <svg width="10" height="14" viewBox="0 0 14 20" className="absolute top-2 left-[5px]">
                    <path d="M1.500 1v15l3.500-3.300L7.500 19l2.500-1.200L7.500 12h4.500z" fill="#fff" stroke="#222" strokeWidth="1.500" />
                </svg>
            </span>
            <span className="pr-1"><Grip /></span>
        </div>
    </footer>
);

const App = () => (
    <div className="relative flex h-screen flex-col overflow-hidden bg-[#d4d4d4] font-['Open_Sans','Noto_Sans',sans-serif]">
        <svg width="0" height="0" className="absolute" aria-hidden="true">
            <defs>
                <linearGradient id="steel" x1="0" y1="0" x2="0" y2="1">
                    <stop offset="0" stopColor="#d4d8df" />
                    <stop offset="1" stopColor="#fdfdfd" />
                </linearGradient>
                <linearGradient id="logo" x1="0" y1="0" x2="1" y2="1">
                    <stop offset="0" stopColor="#4a9bd8" />
                    <stop offset="1" stopColor="#1c4f86" />
                </linearGradient>
                <linearGradient id="stone" x1="0" y1="0" x2="1" y2="1">
                    <stop offset="0" stopColor="#8e8e8e" />
                    <stop offset="1" stopColor="#b6b6b6" />
                </linearGradient>
            </defs>
        </svg>
        <TitleBar />
        <TabBar />
        <Ribbon />
        <OptionsBar />
        <div className="mr-1 ml-1 flex min-h-0 flex-1 bg-[#f0f0f0]">
            <PropertiesPalette />
            <Canvas />
        </div>
        <StatusBar />
        <ProjectBrowser />
    </div>
);

export default App;
